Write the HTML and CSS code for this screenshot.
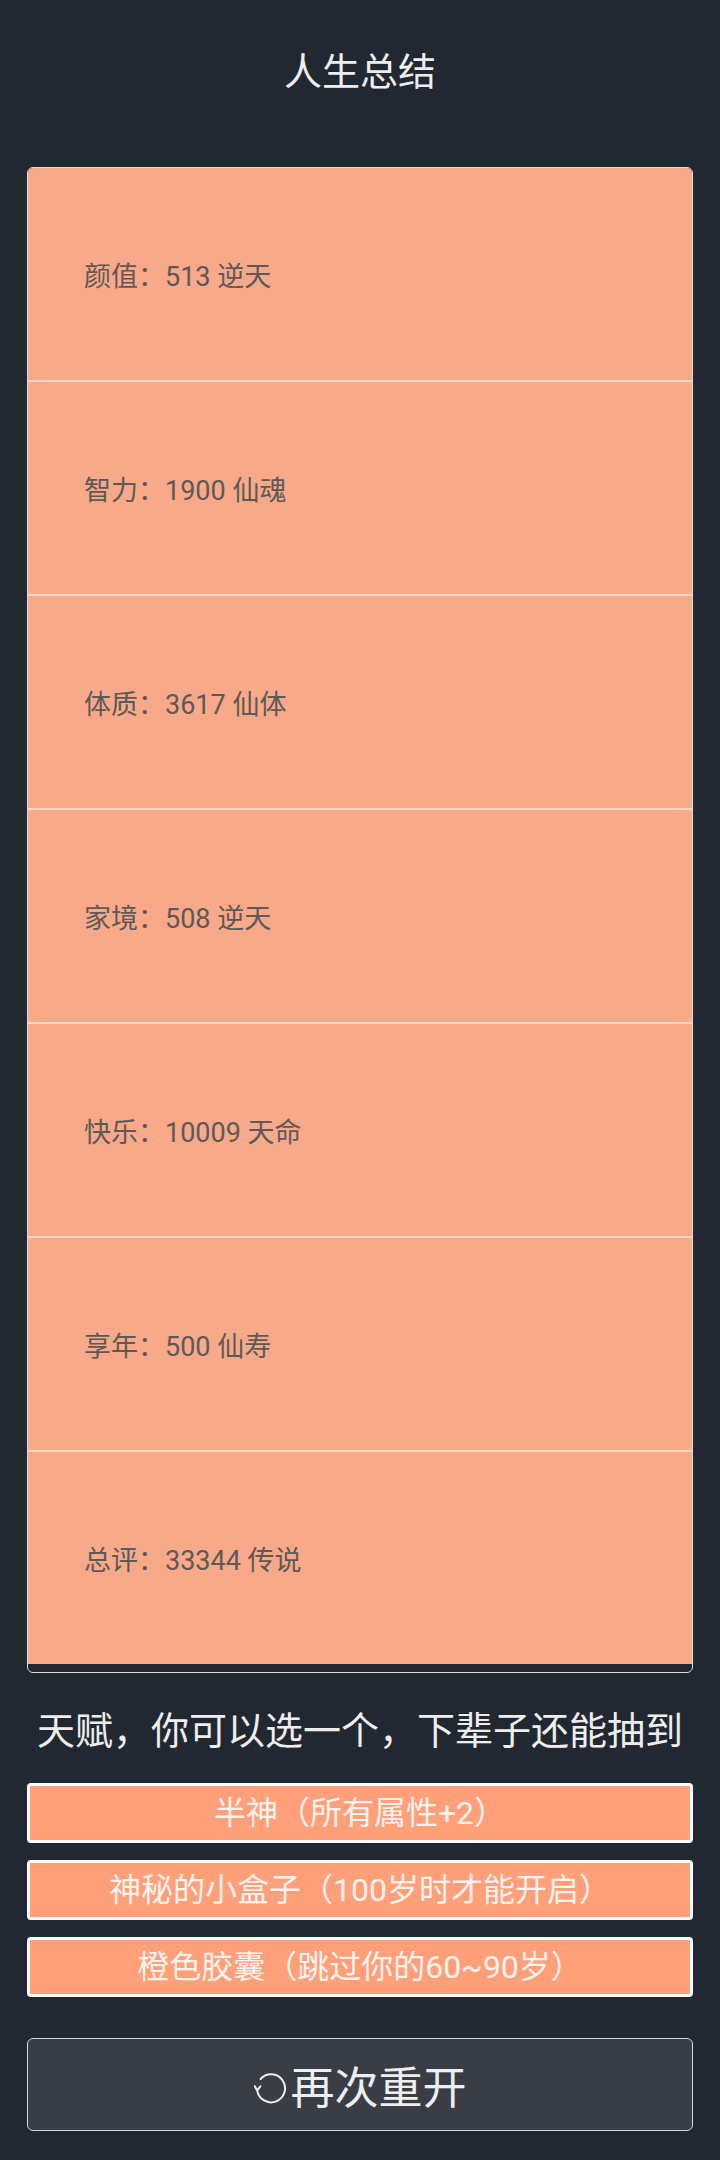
FILE: index.html
```html
<!DOCTYPE html>
<html lang="zh-CN">
<head>
    <meta charset="UTF-8">
    <meta name="viewport" content="width=device-width, initial-scale=1.0">
    <title>人生总结</title>
    <link rel="stylesheet" href="styles.css">
</head>
<body>
    <div class="page">
        <h1 class="title">人生总结</h1>
        <ul class="summary">
            <li>颜值：513 逆天</li>
            <li>智力：1900 仙魂</li>
            <li>体质：3617 仙体</li>
            <li>家境：508 逆天</li>
            <li>快乐：10009 天命</li>
            <li>享年：500 仙寿</li>
            <li>总评：33344 传说</li>
        </ul>
        <div class="subtitle">天赋，你可以选一个，下辈子还能抽到</div>
        <ul class="talents">
            <li>半神（所有属性+2）</li>
            <li>神秘的小盒子（100岁时才能开启）</li>
            <li>橙色胶囊（跳过你的60~90岁）</li>
        </ul>
        <button class="restart">
            <svg class="icon" width="34" height="32" viewBox="0 0 34 32" fill="none" stroke="#eeeeee" stroke-width="2" stroke-linecap="round" stroke-linejoin="round">
                <path d="M6.6 7 A14 14 0 1 1 3.2 18.4"/>
                <path d="M0.6 14 L3.2 18.4 L6.4 14.4"/>
            </svg>
            <span>再次重开</span>
        </button>
    </div>
</body>
</html>
```

FILE: styles.css
```css
body {
    margin: 0;
    background-color: #222831;
    font-family: Roboto, "Noto Sans CJK SC", sans-serif;
    color: #eeeeee;
}
.page {
    padding: 0 27px;
}
.title {
    margin: 44px 0 0;
    font-size: 38px;
    font-weight: normal;
    line-height: 56px;
    text-align: center;
}
.summary {
    list-style: none;
    margin: 67px 0 0;
    padding: 0 0 8px;
    border: 1.5px solid #e2dad6;
    border-radius: 6px;
    overflow: hidden;
}
.summary li {
    display: flex;
    align-items: center;
    height: 212px;
    padding-left: 56px;
    background-color: #f7a98a;
    color: #5e5956;
    font-size: 27px;
}
.summary li + li {
    border-top: 2px solid #fcd6c6;
}
.subtitle {
    margin-top: 30px;
    font-size: 38px;
    line-height: 56px;
    text-align: center;
}
.talents {
    list-style: none;
    margin: 24px 0 0;
    padding: 0;
    display: flex;
    flex-direction: column;
    gap: 17px;
}
.talents li {
    height: 54px;
    line-height: 54px;
    border: 3px solid #ffffff;
    border-radius: 4px;
    background-color: #ffa07a;
    color: #fdf3ee;
    font-size: 32px;
    text-align: center;
}
.restart {
    display: flex;
    align-items: center;
    justify-content: center;
    gap: 3px;
    width: 100%;
    height: 93px;
    margin-top: 41px;
    padding: 0;
    background-color: #393e46;
    border: 1.5px solid #d6d6d8;
    border-radius: 6px;
    color: #eeeeee;
    font-family: inherit;
    font-size: 44px;
}
.restart .icon {
    margin-top: 6px;
}
```
